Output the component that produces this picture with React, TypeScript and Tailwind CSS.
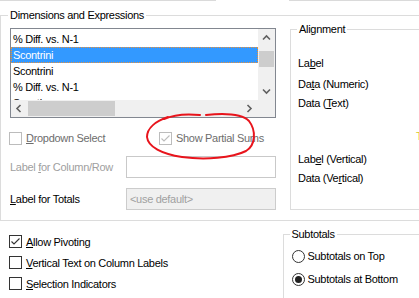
import React from 'react';

type BoxProps = { checked?: boolean; disabled?: boolean };

function CheckBox({ checked, disabled }: BoxProps) {
  const tone = disabled ? '#bcbcbc' : '#333333';
  return (
    <div
      className={`relative w-[13px] h-[13px] shrink-0 border bg-white ${disabled ? 'border-[#bcbcbc]' : 'border-[#333333]'}`}
    >
      {checked && (
        <svg width="11" height="11" viewBox="0 0 11 11" className="absolute left-0 top-0">
          <path d="M1.5 5.5 L4 8 L9.5 2.5" fill="none" stroke={tone} strokeWidth="1.1" />
        </svg>
      )}
    </div>
  );
}

function Radio({ checked }: { checked?: boolean }) {
  return (
    <div className="w-[13px] h-[13px] shrink-0 rounded-full border border-[#333333] bg-white flex items-center justify-center">
      {checked && <div className="w-[7px] h-[7px] rounded-full bg-[#222222]" />}
    </div>
  );
}

function Chevron({ dir }: { dir: 'up' | 'down' | 'left' | 'right' }) {
  const paths = {
    up: 'M1 5.5 L4.5 2 L8 5.5',
    down: 'M1 2.5 L4.5 6 L8 2.5',
    left: 'M5.5 1 L2 4.5 L5.5 8',
    right: 'M2.5 1 L6 4.5 L2.5 8',
  };
  return (
    <svg width="9" height="9" viewBox="0 0 9 9">
      <path d={paths[dir]} fill="none" stroke="#606060" strokeWidth="1.6" />
    </svg>
  );
}

function Legend({ text }: { text: string }) {
  return (
    <span className="absolute top-[-8px] left-[6px] bg-white px-[2px] leading-[14px] text-black">{text}</span>
  );
}

export default function App() {
  const items = [
    { label: '% Diff. vs. N-1' },
    { label: 'Scontrini', selected: true },
    { label: 'Scontrini' },
    { label: '% Diff. vs. N-1' },
    { label: 'Sconti' },
  ];

  return (
    <div className="relative w-[419px] h-[298px] overflow-hidden bg-white text-[11px] leading-[14px] tracking-[-0.3px] text-black font-['Liberation_Sans',Arial,sans-serif]">
      {/* edges of the controls above */}
      <div className="flex h-px">
        <div className="w-[216px] bg-[#dadada]" />
        <div className="ml-[73px] flex-1 bg-[#dadada]" />
      </div>

      {/* Dimensions and Expressions */}
      <div className="relative mt-[14px] w-[440px] h-[206px] border-l border-t border-b border-[#dcdcdc] flex items-start">
        <span className="absolute top-[-8px] left-[7px] bg-white px-[2px] leading-[14px]">Dimensions and Expressions</span>

        <div className="ml-[9px] mt-[12px] w-[266px] flex flex-col">
          {/* list box */}
          <div className="w-[266px] h-[90px] border border-[#828790] flex flex-col">
            <div className="flex h-[71px]">
              <div className="w-[247px] h-[71px] overflow-hidden pt-[2px]">
                {items.map((it, i) => (
                  <div
                    key={i}
                    className={`h-[16px] pl-[1px] border whitespace-nowrap leading-[14px] ${
                      it.selected ? 'bg-[#3399ff] text-white border-dotted border-[#e8903a]' : 'border-transparent'
                    }`}
                  >
                    {it.label}
                  </div>
                ))}
              </div>
              <div className="w-[17px] h-[71px] bg-[#f0f0f0] flex flex-col items-center">
                <div className="h-[18px] flex items-center justify-center"><Chevron dir="up" /></div>
                <div className="mt-[4px] w-[15px] h-[16px] bg-[#cdcdcd]" />
                <div className="mt-auto h-[17px] flex items-center justify-center"><Chevron dir="down" /></div>
              </div>
            </div>
            <div className="flex h-[17px] bg-[#f0f0f0]">
              <div className="w-[247px] flex items-center">
                <div className="w-[16px] flex justify-center"><Chevron dir="left" /></div>
                <div className="ml-[1px] w-[87px] h-[15px] bg-[#cdcdcd]" />
                <div className="ml-auto w-[17px] flex justify-center"><Chevron dir="right" /></div>
              </div>
              <div className="w-[17px]" />
            </div>
          </div>

          {/* check boxes */}
          <div className="mt-[12px] h-[16px] flex items-center -ml-[1px]">
            <div className="w-[150px] flex items-center gap-[4px] text-[#6d6d6d]">
              <CheckBox disabled />
              <span><u className="underline underline-offset-1">D</u>ropdown Select</span>
            </div>
            <div className="flex items-center gap-[4px] text-[#6d6d6d]">
              <CheckBox checked disabled />
              <span>Show Partial Sums</span>
            </div>
          </div>

          <div className="mt-[10px] h-[22px] flex items-center">
            <span className="text-[#a0a0a0]">Label <u className="underline underline-offset-1">f</u>or Column/Row</span>
            <div className="ml-auto w-[150px] h-[22px] border border-[#c9c9c9] bg-white" />
          </div>

          <div className="mt-[10px] h-[22px] flex items-center">
            <span><u className="underline underline-offset-1">L</u>abel for Totals</span>
            <div className="ml-auto w-[150px] h-[22px] border border-[#cccccc] bg-[#f0f0f0] flex items-center pl-[3px] text-[#a0a0a0]">
              &lt;use default&gt;
            </div>
          </div>
        </div>

        {/* Alignment */}
        <div className="relative ml-[14px] mt-[13px] w-[140px] h-[181px] border border-[#dcdcdc] flex flex-col pl-[7px]">
          <Legend text="Alignment" />
          <div className="mt-[26px] h-[14px]">La<u className="underline underline-offset-1">b</u>el</div>
          <div className="mt-[7px] h-[14px]">Da<u className="underline underline-offset-1">t</u>a (Numeric)</div>
          <div className="mt-[5px] h-[14px]">Data (<u className="underline underline-offset-1">T</u>ext)</div>
          <div className="mt-[19px] h-[14px] pl-[118px] text-[#d8c820]">T</div>
          <div className="mt-[9px] h-[14px]">Lab<u className="underline underline-offset-1">e</u>l (Vertical)</div>
          <div className="mt-[5px] h-[14px]">Data (Ve<u className="underline underline-offset-1">r</u>tical)</div>
        </div>
      </div>

      {/* bottom options */}
      <div className="flex items-start">
        <div className="w-[290px] pl-[9px] pt-[10px] flex flex-col">
          <div className="h-[21px] flex items-center gap-[4px]">
            <CheckBox checked />
            <span><u className="underline underline-offset-1">A</u>llow Pivoting</span>
          </div>
          <div className="h-[21px] flex items-center gap-[4px]">
            <CheckBox />
            <span><u className="underline underline-offset-1">V</u>ertical Text on Column Labels</span>
          </div>
          <div className="h-[21px] flex items-center gap-[4px]">
            <CheckBox />
            <span><u className="underline underline-offset-1">S</u>election Indicators</span>
          </div>
          <div className="h-[21px] flex items-center gap-[4px]">
            <CheckBox />
          </div>
        </div>

        <div className="relative mt-[13px] w-[140px] h-[80px] border-l border-t border-[#dcdcdc] pl-[8px] flex flex-col">
          <Legend text="Subtotals" />
          <div className="mt-[12px] h-[18px] flex items-center gap-[3px]">
            <Radio />
            <span>Subtotals on Top</span>
          </div>
          <div className="mt-[5px] h-[18px] flex items-center gap-[3px]">
            <Radio checked />
            <span>Subtotals at Bottom</span>
          </div>
        </div>
      </div>

      {/* red hand-drawn annotation */}
      <svg className="absolute left-0 top-0 pointer-events-none" width="419" height="298" viewBox="0 0 419 298">
        <path
          d="M168 117 C156 121, 147 128, 147 137 C148 147, 162 154, 182 157 C205 160, 232 158, 246 151 C256 145, 256 130, 249 121 C242 114, 226 113, 206 115 M200 115 C190 114, 175 114, 164 119"
          fill="none"
          stroke="#e8141c"
          strokeWidth="2"
          strokeLinecap="round"
        />
      </svg>
    </div>
  );
}
